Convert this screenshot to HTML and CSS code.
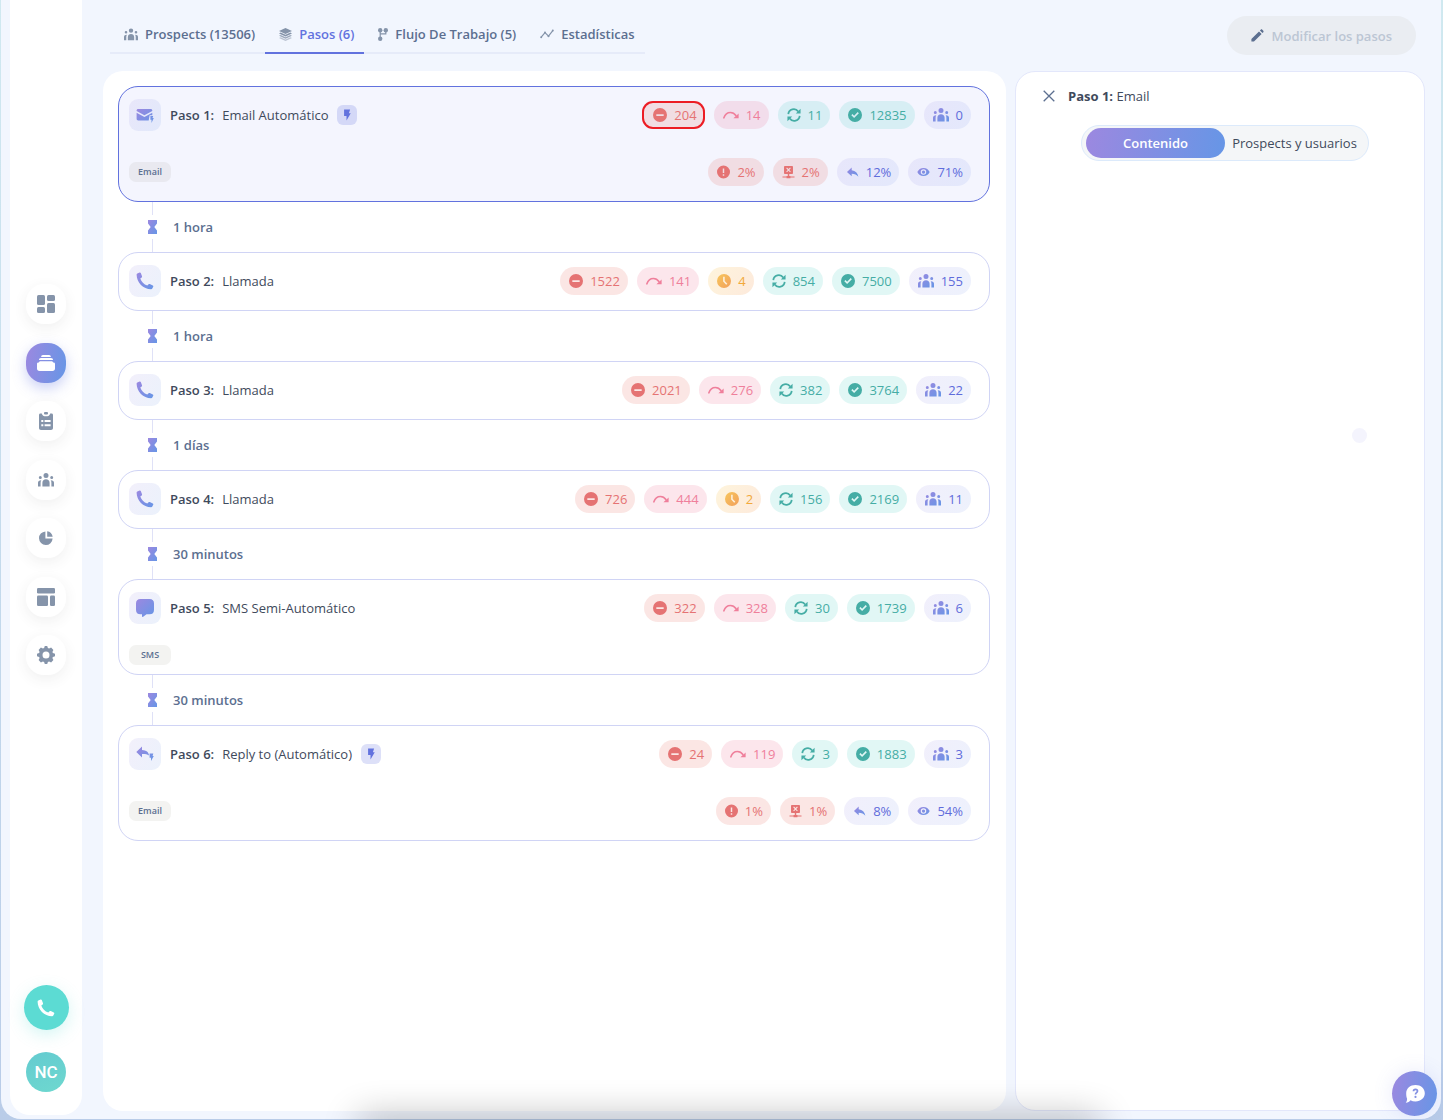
FILE: index.html
```html
<!DOCTYPE html>
<html lang="es">
<head>
    <meta charset="UTF-8">
    <meta name="viewport" content="width=device-width, initial-scale=1">
    <title>Pasos</title>
    <link rel="stylesheet" href="styles.css">
</head>
<body>

<svg class="sprite" aria-hidden="true">
    <defs>
        <linearGradient id="violet" x1="0" y1="0" x2="1" y2="1">
            <stop offset="0" stop-color="#9c88e0"/>
            <stop offset="1" stop-color="#6696e6"/>
        </linearGradient>
        <linearGradient id="orange" x1="0" y1="0" x2="1" y2="1">
            <stop offset="0" stop-color="#f7c65c"/>
            <stop offset="1" stop-color="#f2a05c"/>
        </linearGradient>
        <symbol id="people" viewBox="0 0 16 14">
            <path d="M8 0a2.500 2.500 0 1 1 0 5a2.500 2.500 0 0 1 0-5zM2.300 2.900a1.500 1.500 0 1 1 0 3a1.500 1.500 0 0 1 0-3zM13.700 2.900a1.500 1.500 0 1 1 0 3a1.500 1.500 0 0 1 0-3zM4.400 13.600V9.800c0-2.100 1.500-3.500 3.600-3.500s3.600 1.400 3.600 3.500v3.800zM0 13.600V9.800C0 8.100 1.100 7.200 3.300 7.200C2.700 8 2.600 8.900 2.600 10v3.600zM16 13.600V9.800C16 8.100 14.900 7.200 12.700 7.200c.6.8.7 1.700.7 2.800v3.600z"/>
        </symbol>
        <symbol id="phone" viewBox="0 0 18 18">
            <path d="M1.300 1.600L3.600.6c.5-.2 1 0 1.200.5l1.200 3.100c.2.500 0 .9-.3 1.200L4.300 6.600c1 3.100 3.600 5.900 7 7l1.300-1.300c.3-.4.8-.5 1.200-.3l3 1.400c.5.200.7.700.5 1.200l-1 1.900c-.2.500-.7.800-1.200.8C7.200 17.300.7 10.600.6 2.800c0-.5.2-1 .7-1.200z"/>
        </symbol>
        <symbol id="minus" viewBox="0 0 16 16">
            <path fill-rule="evenodd" d="M8 0a8 8 0 1 1 0 16A8 8 0 0 1 8 0zM3.800 7v2h8.400V7z"/>
        </symbol>
        <symbol id="skip" viewBox="0 0 18 14">
            <path d="M1 10.200C2.300 6.300 5 4.200 8.300 4.200c2.500 0 4.700 1.200 6.200 3.400" fill="none" stroke="currentColor" stroke-width="1.800" stroke-linecap="round"/>
            <path d="M17.600 5.300v5.300h-5.900z"/>
        </symbol>
        <symbol id="sync" viewBox="0 0 16 16">
            <path d="M1.500 7A6.200 6.200 0 0 1 12.800 4M14.500 9A6.200 6.200 0 0 1 3.200 12" fill="none" stroke="currentColor" stroke-width="2"/>
            <path d="M15.500.8v5.400h-5.400zM.5 15.200V9.800h5.400z"/>
        </symbol>
        <symbol id="check" viewBox="0 0 16 16">
            <path fill-rule="evenodd" d="M8 0a8 8 0 1 1 0 16A8 8 0 0 1 8 0zM3.800 8.200l3.200 3.200l5.400-5.300l-1.300-1.400L7 8.800L5.100 6.900z"/>
        </symbol>
        <symbol id="clock" viewBox="0 0 16 16">
            <path fill-rule="evenodd" d="M8 0a8 8 0 1 1 0 16A8 8 0 0 1 8 0zM7 3v5.600l3.500 3.700l1.300-1.200l-3-3.200V3z"/>
        </symbol>
        <symbol id="alert" viewBox="0 0 16 16">
            <path fill-rule="evenodd" d="M8 0a8 8 0 1 1 0 16A8 8 0 0 1 8 0zM7.100 3.600v5.600h1.800V3.600zM7.100 10.800v1.900h1.800v-1.900z"/>
        </symbol>
        <symbol id="bounce" viewBox="0 0 16 16">
            <path fill-rule="evenodd" d="M3.500.6h9c.6 0 1 .4 1 1v8c0 .6-.4 1-1 1H8.900v2.200h1.500v.7h5v1.300H10.400v.8H5.600v-.8h-5v-1.300h5v-.7h1.500v-2.200H3.500c-.6 0-1-.4-1-1v-8c0-.6.400-1 1-1zM6.100 2.500L5.200 3.400l1.900 2l-1.900 2l.9.9l1.900-1.900l1.900 1.900l.9-.9l-1.900-2l1.900-2l-.9-.9L8 4.400z"/>
        </symbol>
        <symbol id="reply" viewBox="0 0 16 16">
            <path d="M7 2.500v3.200c4.700.6 7.400 3.500 8.200 8c-1.900-2.600-4.500-3.700-8.200-3.700v3.200L1.200 7.900z"/>
        </symbol>
        <symbol id="eye" viewBox="0 0 16 16">
            <path fill-rule="evenodd" d="M8 3c3.500 0 6.200 2 7.600 5c-1.400 3-4.100 5-7.600 5S1.800 11 .4 8C1.800 5 4.500 3 8 3zM8 4.600a3.400 3.400 0 1 0 0 6.800a3.400 3.400 0 0 0 0-6.800zM8 6a2 2 0 1 1 0 4a2 2 0 0 1 0-4z"/>
        </symbol>
        <symbol id="bolt" viewBox="0 0 12 14">
            <path d="M2.500.5h7.200L8.300 4.800h2.200L5.400 13.500V8.300H2.500z"/>
        </symbol>
        <symbol id="hourglass" viewBox="0 0 9 14">
            <path d="M0 0h9v3.600L6.300 7L9 10.400V14H0v-3.600L2.700 7L0 3.600z"/>
        </symbol>
        <symbol id="mail-auto" viewBox="0 0 18 18">
            <path d="M2.200 3h12.400c1 0 1.700.7 1.700 1.700v.3L8.400 9.300L.6 5v-.3C.6 3.700 1.200 3 2.200 3zM.6 6.700l7.800 4.200l7.900-4.200V9.200h-2.700l-.9 5.300H2.200c-1 0-1.600-.7-1.600-1.700zM14.400 10h2.800l-.7 2.100h1.300L15.500 17v-3.200h-1.100z"/>
        </symbol>
        <symbol id="reply-auto" viewBox="0 0 18 18">
            <path d="M6 1.600v3.500c4.400.3 6.600 2 7 5.500c-1.900-1.300-4-1.600-7-1.500v3.500L.3 7zM13.600 8.500h3.700L16.600 11h1.200L15 16v-3.300h-1.400z"/>
        </symbol>
        <symbol id="chat" viewBox="0 0 18 18">
            <path d="M4.500 0h9C16.500 0 18 1.500 18 4.500v6.300c0 3-1.500 4.500-4.500 4.500h-3l-3.300 2.500c-.6.400-1.200.1-1.200-.6v-1.900H4.500c-3 0-4.500-1.500-4.500-4.500V4.500C0 1.500 1.500 0 4.500 0z"/>
        </symbol>
    </defs>
</svg>

<div class="app">
    <aside class="sidebar">
        <nav class="sidebar-nav">
            <a href="#" class="nav-link" aria-label="Panel">
                <svg width="18" height="18" viewBox="0 0 18 18"><rect width="8" height="10" rx="1.500"/><rect y="12" width="8" height="6" rx="1.500"/><rect x="10" width="8" height="6" rx="1.500"/><rect x="10" y="8" width="8" height="10" rx="1.500"/></svg>
            </a>
            <a href="#" class="nav-link active" aria-label="Secuencias">
                <svg width="18" height="18" viewBox="0 0 18 18"><path d="M6 1h6c1.200 0 1.800.7 1.800 1.900H4.200C4.200 1.700 4.800 1 6 1zM4 4h10c1.300 0 2 .7 2 2H2c0-1.300.7-2 2-2zM3.600 7.200h10.800c.9 0 1.400.4 1.700 1.200H17c.7.200 1 .8 1 1.600v4.500c0 1.600-.9 2.500-2.500 2.500h-13C.9 17 0 16.100 0 14.500V10c0-.8.300-1.400 1-1.600h.9c.3-.8.800-1.200 1.700-1.200z"/></svg>
            </a>
            <a href="#" class="nav-link" aria-label="Tareas">
                <svg width="14" height="18" viewBox="0 0 14 18"><path fill-rule="evenodd" d="M1.500 1.500h1.300C3.200 3.500 4.700 4.300 7 4.300s3.800-.8 4.200-2.800h1.300c1 0 1.500.6 1.500 1.500v13c0 1.200-.8 2-2 2H2c-1.200 0-2-.8-2-2V3c0-.9.500-1.500 1.500-1.500zM2.300 8v2h2V8zM5.600 8v2h6V8zM2.300 12.300v2h2v-2zM5.600 12.300v2h6v-2z"/><rect x="5" width="4" height="2.500" rx="1"/></svg>
            </a>
            <a href="#" class="nav-link" aria-label="Prospects">
                <svg width="18" height="14"><use href="#people"/></svg>
            </a>
            <a href="#" class="nav-link" aria-label="Informes">
                <svg width="14" height="14" viewBox="0 0 14 14"><path d="M6.400.4v7.100h7.200A6.800 6.800 0 1 1 6.400.4zM8.200.2c3 .4 5 2.500 5.500 5.500H8.200z"/></svg>
            </a>
            <a href="#" class="nav-link" aria-label="Plantillas">
                <svg width="18" height="18" viewBox="0 0 18 18"><rect width="18" height="5.500" rx="1.200"/><rect y="7.500" width="11" height="10.500" rx="1.200"/><rect x="13" y="7.500" width="5" height="10.500" rx="1.200"/></svg>
            </a>
            <a href="#" class="nav-link" aria-label="Ajustes">
                <svg width="18" height="18" viewBox="0 0 18 18"><path fill-rule="evenodd" d="M7.800 0h2.400l.7 2.100l1.200.5l2-1l2.300 2.300l-1 2l.5 1.200l2.100.7v2.400l-2.100.7l-.5 1.200l1 2l-2.300 2.300l-2-1l-1.200.5l-.7 2.100H7.800l-.7-2.100l-1.200-.5l-2 1l-2.300-2.300l1-2l-.5-1.200L0 10.200V7.800l2.100-.7l.5-1.200l-1-2l2.300-2.300l2 1l1.200-.5zM9 5.500a3.500 3.500 0 1 0 0 7a3.500 3.500 0 0 0 0-7z"/></svg>
            </a>
        </nav>
        <div class="sidebar-bottom">
            <button type="button" class="call-btn" aria-label="Llamar">
                <svg width="18" height="18"><use href="#phone"/></svg>
            </button>
            <button type="button" class="avatar">NC</button>
        </div>
    </aside>

    <div class="main">
        <header class="topbar">
            <nav class="tabs">
                <a href="#" class="tab"><svg width="14" height="13"><use href="#people"/></svg>Prospects (13506)</a>
                <a href="#" class="tab active">
                    <svg width="13" height="13" viewBox="0 0 14 14"><path d="M7 0l7 3.200l-7 3.300L0 3.200z"/><path d="M1.800 4.900L7 7.400l5.200-2.500l1.800.9l-7 3.300L0 5.800z"/><path opacity=".8" d="M1.800 7.500L7 10l5.200-2.500l1.800.9l-7 3.200L0 8.400z"/><path opacity=".5" d="M1.800 10L7 12.500L12.200 10l1.800.8L7 14L0 10.800z"/></svg>Pasos (6)
                </a>
                <a href="#" class="tab">
                    <svg width="10" height="13" viewBox="0 0 10 13"><path d="M2.200 3v7M7.800 3v2.800H2.200" fill="none" stroke="currentColor" stroke-width="1.200"/><circle cx="2.200" cy="2.200" r="2.200"/><circle cx="7.800" cy="2.200" r="2.200"/><circle cx="2.200" cy="10.800" r="2.200"/></svg>Flujo De Trabajo (5)
                </a>
                <a href="#" class="tab">
                    <svg width="14" height="10" viewBox="0 0 14 10"><path d="M1.200 8.200L5 3.600l3.500 3.600l4.300-5.600" fill="none" stroke="currentColor" stroke-width="1.200"/><circle cx="1.200" cy="8.300" r="1"/><circle cx="5" cy="3.600" r="1"/><circle cx="8.500" cy="7.200" r="1"/><circle cx="12.800" cy="1.600" r="1"/></svg>Estadísticas
                </a>
            </nav>
            <button type="button" class="edit-btn" disabled>
                <svg width="13" height="13" viewBox="0 0 13 13"><path d="M.4 10L8 2.400L10.600 5L3 12.600H.4zM8.900 1.500l.8-.8c.5-.5 1.200-.5 1.600 0l1 1c.4.400.4 1.100 0 1.600l-.8.800z"/></svg>
                Modificar los pasos
            </button>
        </header>

        <div class="content">
            <section class="panel">
                <article class="step detailed selected">
                    <div class="step-row">
                        <span class="step-icon"><svg width="18" height="18"><use href="#mail-auto"/></svg></span>
                        <h2 class="step-title"><b>Paso 1:</b> <span>Email Automático</span></h2>
                        <span class="auto"><svg width="10" height="12"><use href="#bolt"/></svg></span>
                        <div class="stats">
                            <span class="stat red marked"><svg width="14" height="14"><use href="#minus"/></svg>204</span>
                            <span class="stat pink"><svg width="16" height="14"><use href="#skip"/></svg>14</span>
                            <span class="stat teal"><svg width="14" height="14"><use href="#sync"/></svg>11</span>
                            <span class="stat teal"><svg width="14" height="14"><use href="#check"/></svg>12835</span>
                            <span class="stat indigo"><svg width="16" height="14"><use href="#people"/></svg>0</span>
                        </div>
                    </div>
                    <div class="step-meta">
                        <span class="tag">Email</span>
                        <div class="stats">
                            <span class="stat red"><svg width="13" height="14"><use href="#alert"/></svg>2%</span>
                            <span class="stat red"><svg width="13" height="14"><use href="#bounce"/></svg>2%</span>
                            <span class="stat indigo"><svg width="13" height="14"><use href="#reply"/></svg>12%</span>
                            <span class="stat indigo"><svg width="13" height="14"><use href="#eye"/></svg>71%</span>
                        </div>
                    </div>
                </article>

                <div class="delay"><span class="delay-line"><svg width="9" height="14"><use href="#hourglass"/></svg></span>1 hora</div>

                <article class="step">
                    <div class="step-row">
                        <span class="step-icon"><svg width="18" height="18"><use href="#phone"/></svg></span>
                        <h2 class="step-title"><b>Paso 2:</b> <span>Llamada</span></h2>
                        <div class="stats">
                            <span class="stat red"><svg width="14" height="14"><use href="#minus"/></svg>1522</span>
                            <span class="stat pink"><svg width="16" height="14"><use href="#skip"/></svg>141</span>
                            <span class="stat yellow"><svg width="14" height="14"><use href="#clock"/></svg>4</span>
                            <span class="stat teal"><svg width="14" height="14"><use href="#sync"/></svg>854</span>
                            <span class="stat teal"><svg width="14" height="14"><use href="#check"/></svg>7500</span>
                            <span class="stat indigo"><svg width="16" height="14"><use href="#people"/></svg>155</span>
                        </div>
                    </div>
                </article>

                <div class="delay"><span class="delay-line"><svg width="9" height="14"><use href="#hourglass"/></svg></span>1 hora</div>

                <article class="step">
                    <div class="step-row">
                        <span class="step-icon"><svg width="18" height="18"><use href="#phone"/></svg></span>
                        <h2 class="step-title"><b>Paso 3:</b> <span>Llamada</span></h2>
                        <div class="stats">
                            <span class="stat red"><svg width="14" height="14"><use href="#minus"/></svg>2021</span>
                            <span class="stat pink"><svg width="16" height="14"><use href="#skip"/></svg>276</span>
                            <span class="stat teal"><svg width="14" height="14"><use href="#sync"/></svg>382</span>
                            <span class="stat teal"><svg width="14" height="14"><use href="#check"/></svg>3764</span>
                            <span class="stat indigo"><svg width="16" height="14"><use href="#people"/></svg>22</span>
                        </div>
                    </div>
                </article>

                <div class="delay"><span class="delay-line"><svg width="9" height="14"><use href="#hourglass"/></svg></span>1 días</div>

                <article class="step">
                    <div class="step-row">
                        <span class="step-icon"><svg width="18" height="18"><use href="#phone"/></svg></span>
                        <h2 class="step-title"><b>Paso 4:</b> <span>Llamada</span></h2>
                        <div class="stats">
                            <span class="stat red"><svg width="14" height="14"><use href="#minus"/></svg>726</span>
                            <span class="stat pink"><svg width="16" height="14"><use href="#skip"/></svg>444</span>
                            <span class="stat yellow"><svg width="14" height="14"><use href="#clock"/></svg>2</span>
                            <span class="stat teal"><svg width="14" height="14"><use href="#sync"/></svg>156</span>
                            <span class="stat teal"><svg width="14" height="14"><use href="#check"/></svg>2169</span>
                            <span class="stat indigo"><svg width="16" height="14"><use href="#people"/></svg>11</span>
                        </div>
                    </div>
                </article>

                <div class="delay"><span class="delay-line"><svg width="9" height="14"><use href="#hourglass"/></svg></span>30 minutos</div>

                <article class="step detailed">
                    <div class="step-row">
                        <span class="step-icon"><svg width="18" height="18"><use href="#chat"/></svg></span>
                        <h2 class="step-title"><b>Paso 5:</b> <span>SMS Semi-Automático</span></h2>
                        <div class="stats">
                            <span class="stat red"><svg width="14" height="14"><use href="#minus"/></svg>322</span>
                            <span class="stat pink"><svg width="16" height="14"><use href="#skip"/></svg>328</span>
                            <span class="stat teal"><svg width="14" height="14"><use href="#sync"/></svg>30</span>
                            <span class="stat teal"><svg width="14" height="14"><use href="#check"/></svg>1739</span>
                            <span class="stat indigo"><svg width="16" height="14"><use href="#people"/></svg>6</span>
                        </div>
                    </div>
                    <div class="step-meta">
                        <span class="tag">SMS</span>
                    </div>
                </article>

                <div class="delay"><span class="delay-line"><svg width="9" height="14"><use href="#hourglass"/></svg></span>30 minutos</div>

                <article class="step detailed">
                    <div class="step-row">
                        <span class="step-icon"><svg width="18" height="18"><use href="#reply-auto"/></svg></span>
                        <h2 class="step-title"><b>Paso 6:</b> <span>Reply to (Automático)</span></h2>
                        <span class="auto"><svg width="10" height="12"><use href="#bolt"/></svg></span>
                        <div class="stats">
                            <span class="stat red"><svg width="14" height="14"><use href="#minus"/></svg>24</span>
                            <span class="stat pink"><svg width="16" height="14"><use href="#skip"/></svg>119</span>
                            <span class="stat teal"><svg width="14" height="14"><use href="#sync"/></svg>3</span>
                            <span class="stat teal"><svg width="14" height="14"><use href="#check"/></svg>1883</span>
                            <span class="stat indigo"><svg width="16" height="14"><use href="#people"/></svg>3</span>
                        </div>
                    </div>
                    <div class="step-meta">
                        <span class="tag">Email</span>
                        <div class="stats">
                            <span class="stat red"><svg width="13" height="14"><use href="#alert"/></svg>1%</span>
                            <span class="stat red"><svg width="13" height="14"><use href="#bounce"/></svg>1%</span>
                            <span class="stat indigo"><svg width="13" height="14"><use href="#reply"/></svg>8%</span>
                            <span class="stat indigo"><svg width="13" height="14"><use href="#eye"/></svg>54%</span>
                        </div>
                    </div>
                </article>
            </section>

            <aside class="panel details">
                <div class="details-header">
                    <button type="button" class="close-btn" aria-label="Cerrar">
                        <svg width="12" height="12" viewBox="0 0 12 12"><path d="M.7.7l10.600 10.600M11.300.7L.7 11.300" fill="none" stroke="currentColor" stroke-width="1.300"/></svg>
                    </button>
                    <h2 class="details-title"><b>Paso 1:</b> Email</h2>
                </div>
                <div class="switch">
                    <button type="button" class="active">Contenido</button>
                    <button type="button">Prospects y usuarios</button>
                </div>
                <span class="loading-dot"></span>
            </aside>
        </div>
    </div>
</div>

<div class="dock-shadow"></div>
<button type="button" class="help-btn" aria-label="Ayuda">
    <svg width="20" height="18" viewBox="0 0 20 18"><path fill="#fff" d="M10.500 0c5.300 0 9.300 3.500 9.300 8.200s-4 8.200-9.300 8.200c-1.900 0-3.600-.4-5-1.200c-1 1.500-2.600 2.500-4.700 2.500c.9-1.100 1.300-2.500 1.300-4C1.400 12.200 1.200 10.300 1.200 8.200C1.200 3.500 5.200 0 10.500 0z"/><path d="M8.500 6.300c0-1.300.8-2 2-2s2 .7 2 1.800c0 1.600-2 1.600-2 3.300" fill="none" stroke="#8390e2" stroke-width="1.700"/><circle cx="10.500" cy="11.900" r="1.100" fill="#8390e2"/></svg>
</button>

</body>
</html>
```
FILE: styles.css
```css
* {
    box-sizing: border-box;
}

body {
    margin: 0;
    min-height: 100vh;
    padding: 0 2px 1px 1px;
    background: linear-gradient(#d0e9f0, #b9cce8);
    font-family: "Open Sans", "Noto Sans", sans-serif;
    font-size: 13px;
    line-height: 18px;
    color: #3f4a5c;
}

button {
    padding: 0;
    border: none;
    background: none;
    font: inherit;
    color: inherit;
    cursor: pointer;
}

a {
    text-decoration: none;
}

svg {
    flex: none;
    fill: currentColor;
}

.sprite {
    position: absolute;
    width: 0;
    height: 0;
}

.app {
    display: flex;
    min-height: calc(100vh - 1px);
    background-color: #f2f6fe;
    border-radius: 0 0 20px 20px;
}

/* sidebar */

.sidebar {
    display: flex;
    flex-direction: column;
    justify-content: space-between;
    align-items: center;
    width: 72px;
    margin: 0 0 4px 9px;
    padding: 284px 0 23px;
    background-color: #fff;
    border-radius: 0 0 20px 20px;
}

.sidebar-nav {
    display: flex;
    flex-direction: column;
    justify-content: space-between;
    height: 391px;
}

.nav-link {
    display: flex;
    align-items: center;
    justify-content: center;
    width: 40px;
    height: 40px;
    border-radius: 18px;
    background-color: #fff;
    color: #8594aa;
    box-shadow: 0 4px 14px rgba(60, 60, 60, 0.08);
}

.nav-link.active {
    background: linear-gradient(100deg, #9c88e0, #6696e6);
    color: #fff;
    box-shadow: 0 5px 14px rgba(102, 120, 226, 0.35);
}

.sidebar-bottom {
    display: flex;
    flex-direction: column;
    align-items: center;
    gap: 22px;
}

.call-btn {
    display: flex;
    align-items: center;
    justify-content: center;
    width: 45px;
    height: 45px;
    border-radius: 50%;
    background-color: #5cdbd3;
    color: #fff;
    box-shadow: 0 5px 16px rgba(92, 219, 211, 0.25);
}

.avatar {
    width: 40px;
    height: 40px;
    border-radius: 50%;
    background: linear-gradient(160deg, #64cbd0, #6ed8cf);
    color: #fff;
    font-family: Roboto, sans-serif;
    font-size: 17px;
    font-weight: 500;
}

/* top bar */

.main {
    display: flex;
    flex: 1;
    flex-direction: column;
    min-width: 0;
    padding: 0 16px 8px 21px;
}

.topbar {
    display: flex;
    align-items: flex-start;
    justify-content: space-between;
    height: 71px;
    padding: 16px 9px 0 7px;
}

.tabs {
    display: flex;
    border-bottom: 2px solid #e6ebf9;
}

.tab {
    display: flex;
    align-items: center;
    gap: 7px;
    height: 38px;
    margin-bottom: -2px;
    padding: 0 10px 0 14px;
    border-bottom: 2px solid transparent;
    color: #5c6f90;
    font-weight: 600;
}

.tab svg {
    color: #8594aa;
}

.tab.active {
    border-color: #6272de;
    color: #6272de;
}

.edit-btn {
    display: flex;
    align-items: center;
    gap: 8px;
    height: 39px;
    padding: 0 24px;
    border-radius: 20px;
    background-color: #eaedf2;
    color: #bcc6d4;
    font-weight: 600;
    cursor: default;
}

.edit-btn svg {
    color: #5c6f90;
}

/* steps */

.content {
    display: flex;
    flex: 1;
    gap: 9px;
}

.panel {
    flex: 1;
    padding: 15px 16px 15px 15px;
    background-color: #fff;
    border-radius: 20px;
}

.step {
    padding: 12px 18px 13px 10px;
    border: 1px solid #d0d4f5;
    border-radius: 20px;
}

.step.detailed {
    padding-bottom: 9px;
}

.step.selected {
    border-color: #6272de;
    background-color: #f4f5fe;
}

.step-row {
    display: flex;
    align-items: center;
    gap: 9px;
    min-height: 32px;
}

.step-icon {
    display: flex;
    align-items: center;
    justify-content: center;
    width: 32px;
    height: 32px;
    border-radius: 9px;
    background: linear-gradient(120deg, rgba(156, 136, 224, 0.13), rgba(102, 150, 230, 0.13));
}

.step-icon svg,
.delay svg,
.indigo svg {
    fill: url(#violet);
}

.step-title {
    display: flex;
    gap: 8px;
    margin: 0;
    font-size: 13px;
    font-weight: 400;
}

.step-title b {
    font-weight: 600;
}

.auto {
    display: flex;
    align-items: center;
    justify-content: center;
    width: 20px;
    height: 20px;
    border-radius: 6px;
    background-color: rgba(98, 114, 222, 0.22);
    color: #6272de;
}

.stats {
    display: flex;
    gap: 9px;
    margin-left: auto;
}

.stat {
    display: flex;
    align-items: center;
    gap: 7px;
    height: 28px;
    padding: 0 8px 0 9px;
    border-radius: 14px;
}

.stat.red {
    background-color: rgba(229, 85, 75, 0.15);
    color: #e57373;
}

.stat.pink {
    background-color: rgba(235, 80, 120, 0.14);
    color: #ef7f9b;
}

.stat.yellow {
    background: linear-gradient(120deg, rgba(250, 200, 80, 0.2), rgba(245, 150, 80, 0.2));
    color: #f2a93b;
}

.yellow svg {
    fill: url(#orange);
}

.stat.teal {
    background-color: rgba(40, 195, 185, 0.14);
    color: #45ada5;
}

.stat.indigo {
    background: linear-gradient(120deg, rgba(120, 100, 220, 0.1), rgba(80, 120, 230, 0.1));
    color: #5f6cdb;
}

.stat.marked {
    padding-left: 11px;
    border-radius: 11px;
    box-shadow: inset 0 0 0 2px #ec1c24;
}

.step-meta {
    display: flex;
    align-items: center;
    margin-top: 21px;
}

.step-meta .stats {
    padding: 6px 0;
}

.tag {
    min-width: 42px;
    height: 20px;
    padding: 0 9px;
    border-radius: 7px;
    background-color: rgba(120, 120, 100, 0.09);
    color: #5c6f90;
    font-size: 9px;
    font-weight: 600;
    line-height: 19px;
    text-align: center;
}

.delay {
    display: flex;
    align-items: center;
    gap: 16px;
    height: 50px;
    padding-left: 30px;
    color: #5c6f90;
    font-weight: 600;
}

.delay-line {
    display: flex;
    flex-direction: column;
    align-items: center;
    justify-content: space-between;
    height: 50px;
}

.delay-line::before,
.delay-line::after {
    content: "";
    width: 1px;
    height: 13px;
    background-color: #dfe1f7;
}

/* details panel */

.details {
    position: relative;
    flex: 0 0 410px;
    padding: 15px 17px 15px 27px;
    border: 1px solid #e3e7fb;
}

.details-header {
    display: flex;
    align-items: center;
    gap: 13px;
}

.close-btn {
    display: flex;
    color: #5c6f90;
}

.details-title {
    margin: 0;
    font-size: 13px;
    font-weight: 400;
}

.switch {
    display: flex;
    width: 288px;
    margin: 20px auto 0;
    padding: 2px 4px;
    border: 1px solid #dceafb;
    border-radius: 18px;
    background-color: #f4f6f8;
}

.switch button {
    flex: 1;
    height: 30px;
    border-radius: 15px;
    white-space: nowrap;
}

.switch .active {
    background: linear-gradient(100deg, #9c88e0, #6696e6);
    color: #fff;
    font-weight: 600;
}

.loading-dot {
    position: absolute;
    top: 356px;
    right: 57px;
    width: 15px;
    height: 15px;
    border-radius: 50%;
    background-color: #f4f4fd;
}

/* floating items */

.dock-shadow {
    position: fixed;
    top: 100%;
    left: 25%;
    right: 24%;
    height: 20px;
    box-shadow: 0 0 36px 2px rgba(0, 0, 0, 0.32);
    pointer-events: none;
}

.help-btn {
    position: fixed;
    right: 6px;
    bottom: 4px;
    display: flex;
    align-items: center;
    justify-content: center;
    width: 45px;
    height: 45px;
    border-radius: 50%;
    background: linear-gradient(100deg, #9c88e0, #6696e6);
    box-shadow: 0 0 20px rgba(98, 114, 222, 0.15);
}
```
